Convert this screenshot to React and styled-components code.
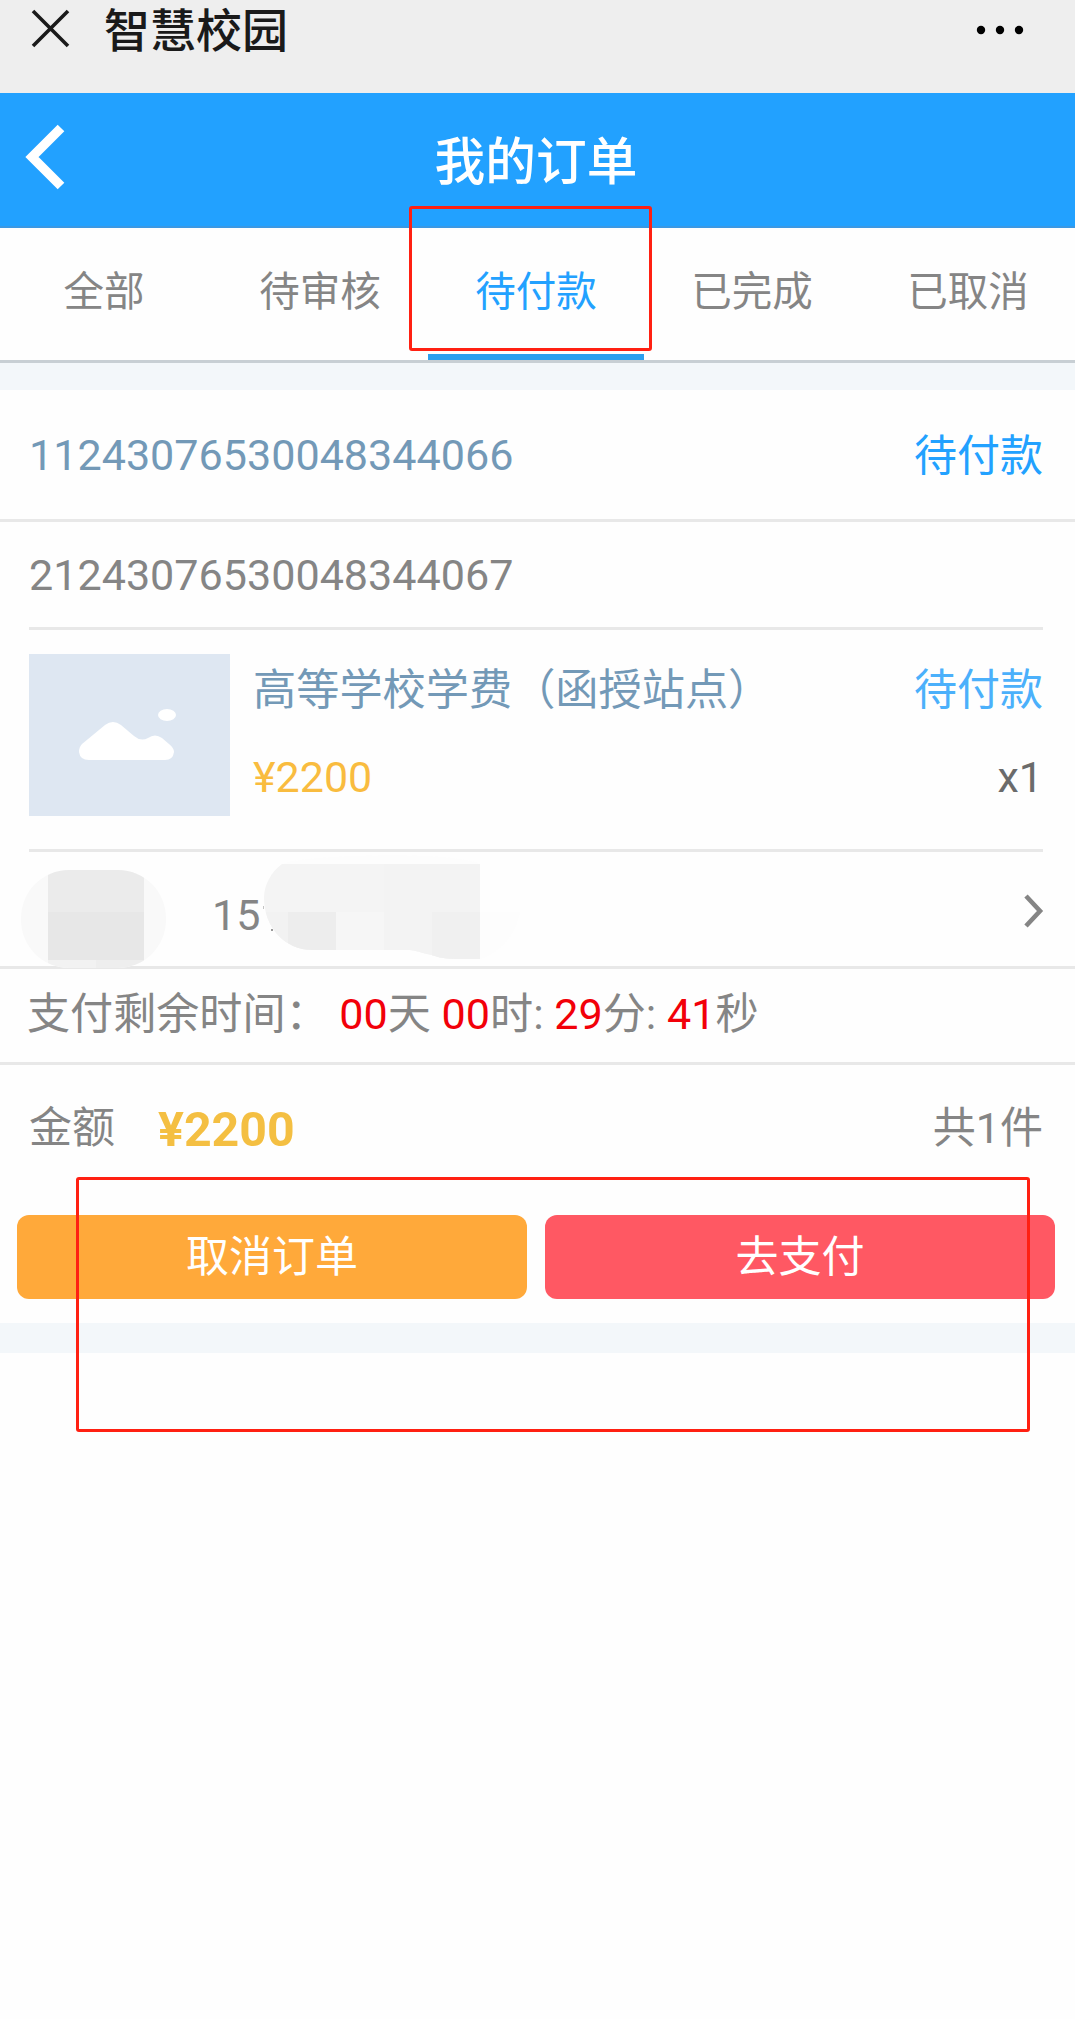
import React from 'react';
import styled, { createGlobalStyle } from 'styled-components';

const GlobalStyle = createGlobalStyle`
  * {
    box-sizing: border-box;
  }

  body {
    margin: 0;
    background: #fefefe;
    font-family: Roboto, 'Noto Sans CJK SC', sans-serif;
    font-size: 43px;
    color: #858585;
  }
`;

const Page = styled.div`
  position: relative;
  width: 1075px;
  height: 2019px;
  overflow: hidden;
  background: #fefefe;
  line-height: 60px;
  white-space: nowrap;
`;

const TopBar = styled.div`
  display: flex;
  align-items: flex-start;
  height: 93px;
  padding: 0 50px 0 30px;
  background: #eeeeee;
  color: #1a1a1a;
`;

const CloseIcon = styled.svg`
  width: 41px;
  height: 41px;
  margin-top: 8px;
`;

const TopTitle = styled.div`
  flex: 1;
  margin-left: 33px;
  font-size: 46px;
  font-weight: 500;
  line-height: 62px;
`;

const DotsIcon = styled.svg`
  width: 50px;
  height: 12px;
  margin-top: 24px;
`;

const Header = styled.div`
  display: grid;
  grid-template-columns: 120px 1fr 120px;
  align-items: center;
  height: 135px;
  background: #22a1ff;
  border-bottom: 2px solid #3b98e3;
  color: #fff;
`;

const BackIcon = styled.svg`
  width: 44px;
  height: 68px;
  margin: -6px 0 0 23px;
`;

const HeaderTitle = styled.div`
  padding: 6px 3px 0 0;
  text-align: center;
  font-size: 50.7px;
  font-weight: 500;
`;

const Tabs = styled.div`
  display: flex;
  height: 135px;
  border-bottom: 3px solid #c8cfd4;
`;

const TabList = styled.div`
  display: flex;
  margin-left: -4px;
`;

const Tab = styled.div`
  flex: 0 0 216px;
  height: 132px;
  padding-top: 34px;
  border-bottom: 6px solid ${(props) => (props.$active ? '#2c9fee' : 'transparent')};
  color: ${(props) => (props.$active ? '#22a1ff' : '#858585')};
  font-size: 40.5px;
  text-align: center;
`;

const Gap = styled.div`
  height: ${(props) => props.$size}px;
  background: #f3f7fa;
`;

const OrderRow = styled.div`
  display: flex;
  align-items: center;
  justify-content: space-between;
  height: 132px;
  padding: 2px 32px 0 29px;
  border-bottom: 3px solid #e8e8e8;
`;

const OrderNo = styled.span`
  color: ${(props) => (props.$main ? '#7399b7' : '#858585')};
  font-size: 43.1px;
`;

const Status = styled.span`
  color: ${(props) => (props.$light ? '#4bb0fb' : '#22a1ff')};
`;

const Detail = styled.div`
  margin: 0 32px 0 29px;
`;

const SubOrder = styled.div`
  display: flex;
  align-items: center;
  height: 108px;
  padding-top: 3px;
  border-bottom: 3px solid #e8e8e8;
`;

const Product = styled.div`
  display: flex;
  height: 222px;
  padding-top: 24px;
  border-bottom: 3px solid #e8e8e8;
`;

const Thumb = styled.svg`
  flex: none;
  width: 201px;
  height: 162px;
  background: #dee7f2;
`;

const ProductBody = styled.div`
  flex: 1;
  display: flex;
  flex-direction: column;
  gap: 27px;
  padding: 6px 0 0 23px;
`;

const Line = styled.div`
  display: flex;
  justify-content: space-between;
  height: 60px;
`;

const ProductName = styled.span`
  padding-top: 1px;
  color: #7399b7;
  font-size: 43.2px;
`;

const Price = styled.span`
  color: #f9bc3f;
`;

const Count = styled.span`
  color: #6b6b6b;
`;

const Contact = styled.div`
  position: relative;
  display: flex;
  align-items: center;
  justify-content: space-between;
  height: 117px;
  padding: 12px 31px 0 212px;
  border-bottom: 3px solid #e8e8e8;
`;

const Mask = styled.svg`
  position: absolute;
  left: 0;
  top: 0;
  width: 560px;
  height: 120px;
`;

const ArrowIcon = styled.svg`
  width: 21px;
  height: 34px;
  margin-top: -8px;
`;

const Countdown = styled.div`
  display: flex;
  align-items: center;
  height: 96px;
  padding: 0 0 1px 27px;
  border-bottom: 3px solid #e8e8e8;
  font-size: 43.1px;
  white-space: pre;
`;

const Time = styled.span`
  color: #f20009;
`;

const Summary = styled.div`
  display: flex;
  align-items: center;
  height: 126px;
  padding: 0 32px 0 29px;
`;

const Total = styled.span`
  flex: 1;
  padding: 3px 0 0 43px;
  color: #f4bf42;
  font-size: 48.3px;
  font-weight: 700;
`;

const Actions = styled.div`
  display: flex;
  gap: 18px;
  padding: 24px 20px 24px 17px;
`;

const Button = styled.button`
  flex: 1;
  height: 84px;
  padding: 0;
  border: 0;
  border-radius: 12px;
  background: ${(props) => (props.$pay ? '#ff5863' : '#ffa93a')};
  color: #fff;
  font: inherit;
  line-height: 84px;
`;

// red marker frames laid over the page
const Marker = styled.div`
  position: absolute;
  left: ${(props) => props.$x}px;
  top: ${(props) => props.$y}px;
  width: ${(props) => props.$w}px;
  height: ${(props) => props.$h}px;
  border: 3px solid #ff2012;
  border-radius: 3px;
`;

const tabs = ['全部', '待审核', '待付款', '已完成', '已取消'];

const App = () => {
  return (
    <Page>
      <GlobalStyle />
      <TopBar>
        <CloseIcon viewBox="0 0 41 41">
          <path d="M3 3L38 38M38 3L3 38" stroke="#1a1a1a" strokeWidth="3.6" />
        </CloseIcon>
        <TopTitle>智慧校园</TopTitle>
        <DotsIcon viewBox="0 0 50 12">
          <circle cx="6" cy="6" r="4.2" />
          <circle cx="25" cy="6" r="4.2" />
          <circle cx="44" cy="6" r="4.2" />
        </DotsIcon>
      </TopBar>

      <Header>
        <BackIcon viewBox="0 0 44 68" fill="none">
          <path d="M38 5L9 34L38 63" stroke="#fff" strokeWidth="9.4" />
        </BackIcon>
        <HeaderTitle>我的订单</HeaderTitle>
      </Header>

      <Tabs>
        <TabList>
          {tabs.map((tab) => (
            <Tab key={tab} $active={tab === '待付款'}>{tab}</Tab>
          ))}
        </TabList>
      </Tabs>
      <Gap $size={27} />

      <OrderRow>
        <OrderNo $main>11243076530048344066</OrderNo>
        <Status>待付款</Status>
      </OrderRow>

      <Detail>
        <SubOrder>
          <OrderNo>21243076530048344067</OrderNo>
        </SubOrder>
        <Product>
          <Thumb viewBox="0 0 201 162">
            <path
              d="M53 90L76 71Q84 65 92 71L105 82Q112 88 119 84Q126 79 133 84L140 90Q145 94 145 98Q144 106 136 106H60Q51 106 50 98Q50 93 53 90Z"
              fill="#fff"
            />
            <ellipse cx="138" cy="61" rx="9" ry="6" fill="#fff" />
          </Thumb>
          <ProductBody>
            <Line>
              <ProductName>高等学校学费（函授站点）</ProductName>
              <Status $light>待付款</Status>
            </Line>
            <Line>
              <Price>¥2200</Price>
              <Count>x1</Count>
            </Line>
          </ProductBody>
        </Product>
      </Detail>

      <Contact>
        <span>15</span>
        <ArrowIcon viewBox="0 0 21 34" fill="none">
          <path d="M3 2L17 17L3 32" stroke="#858585" strokeWidth="4.6" />
        </ArrowIcon>
        {/* mosaic over the name and the phone number */}
        <Mask viewBox="0 0 560 120">
          <defs>
            <clipPath id="nameMask">
              <rect x="21" y="18" width="145" height="98" rx="48" />
            </clipPath>
            <clipPath id="phoneMask">
              <path d="M282 12H480V107H455C440 107 434 103 427 102C418 100 416 98 405 98H312C285 98 264 75 264 46C264 33 271 20 282 12Z" />
            </clipPath>
          </defs>
          <g clipPath="url(#nameMask)">
            <rect x="21" y="18" width="145" height="98" fill="#f9f9f9" />
            <rect x="48" y="18" width="96" height="42" fill="#ebebeb" />
            <rect x="48" y="60" width="96" height="48" fill="#e7e7e7" />
            <rect x="48" y="108" width="48" height="8" fill="#f2f2f2" />
            <rect x="96" y="108" width="48" height="8" fill="#eeeeee" />
          </g>
          <path d="M480 60H520C516 82 503 99 480 107Z" fill="#fdfdfd" />
          <path d="M282 12C300 3 450 -2 480 12Z" fill="#fdfdfd" />
          <rect x="263" y="54" width="1" height="3" fill="#c4c4c4" />
          <rect x="271" y="77" width="2" height="2" fill="#9a9a9a" />
          <g clipPath="url(#phoneMask)">
            <rect x="264" y="12" width="216" height="96" fill="#f4f4f4" />
            <rect x="264" y="60" width="24" height="48" fill="#f2f2f2" />
            <rect x="288" y="60" width="48" height="48" fill="#ededed" />
            <rect x="336" y="60" width="48" height="48" fill="#f6f6f6" />
            <rect x="384" y="12" width="96" height="96" fill="#f3f3f3" />
            <rect x="432" y="60" width="48" height="48" fill="#f0f0f0" />
          </g>
        </Mask>
      </Contact>

      <Countdown>
        支付剩余时间： <Time>00</Time>天 <Time>00</Time>时: <Time>29</Time>分: <Time>41</Time>秒
      </Countdown>

      <Summary>
        <span>金额</span>
        <Total>¥2200</Total>
        <span>共1件</span>
      </Summary>

      <Actions>
        <Button>取消订单</Button>
        <Button $pay>去支付</Button>
      </Actions>
      <Gap $size={30} />

      <Marker $x={409} $y={206} $w={243} $h={145} />
      <Marker $x={76} $y={1177} $w={954} $h={255} />
    </Page>
  );
};

export default App;
